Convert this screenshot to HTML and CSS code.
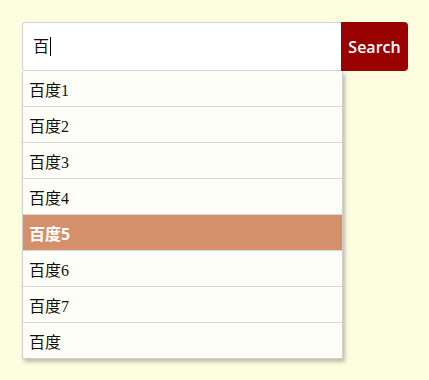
FILE: index.html
```html
<!DOCTYPE html>
<html lang="zh">
<head>
  <meta charset="UTF-8" />
  <title>Search</title>
  <link rel="stylesheet" href="styles.css">
</head>
<body>

  <div class="buscador">
    <div class="fila">
      <div class="caja">百<span class="cursor"></span></div>
      <button type="button" class="btn">Search</button>
    </div>

    <ul class="lista">
      <li>百度1</li>
      <li>百度2</li>
      <li>百度3</li>
      <li>百度4</li>
      <li class="activo">百度5</li>
      <li>百度6</li>
      <li>百度7</li>
      <li>百度</li>
    </ul>
  </div>

</body>
</html>
```

FILE: styles.css
```css
body { margin: 0; padding: 22px; background-color: #fdfddf; font-family: "Liberation Serif", "Noto Sans CJK SC", serif; color: #111; }
.buscador { width: 386px; }
.fila { display: flex; height: 49px; }
.caja { box-sizing: border-box; width: 319px; height: 49px; background: #fff; border: 1px solid #d2d2d2; border-right: none; border-radius: 4px 0 0 4px; padding: 14px 10px; font-size: 16px; line-height: 20px; display: flex; align-items: center; }
.cursor { display: inline-block; width: 1px; height: 19px; background: #000; margin-left: 1px; }
.btn { width: 67px; height: 49px; background: #990000; color: #fff; border: none; border-radius: 0 4px 4px 0; font-family: "Open Sans", "Liberation Sans", sans-serif; font-size: 16px; font-weight: 600; padding: 0; cursor: pointer; }
.lista { list-style: none; margin: 0; padding: 0; width: 319px; background: #fefef8; border: 1px solid #cfcfcf; border-top: none; box-shadow: 2px 3px 4px rgba(0, 0, 0, 0.25); }
.lista li { height: 33px; padding-top: 2px; line-height: 35px; padding-left: 6px; font-size: 16px; border-bottom: 1px solid #d8d8d8; }
.lista li:last-child { border-bottom: none; }
.lista li.activo { background: #d4906a; color: #fff; font-family: "Open Sans", "Noto Sans CJK SC", sans-serif; font-weight: bold; }
```
